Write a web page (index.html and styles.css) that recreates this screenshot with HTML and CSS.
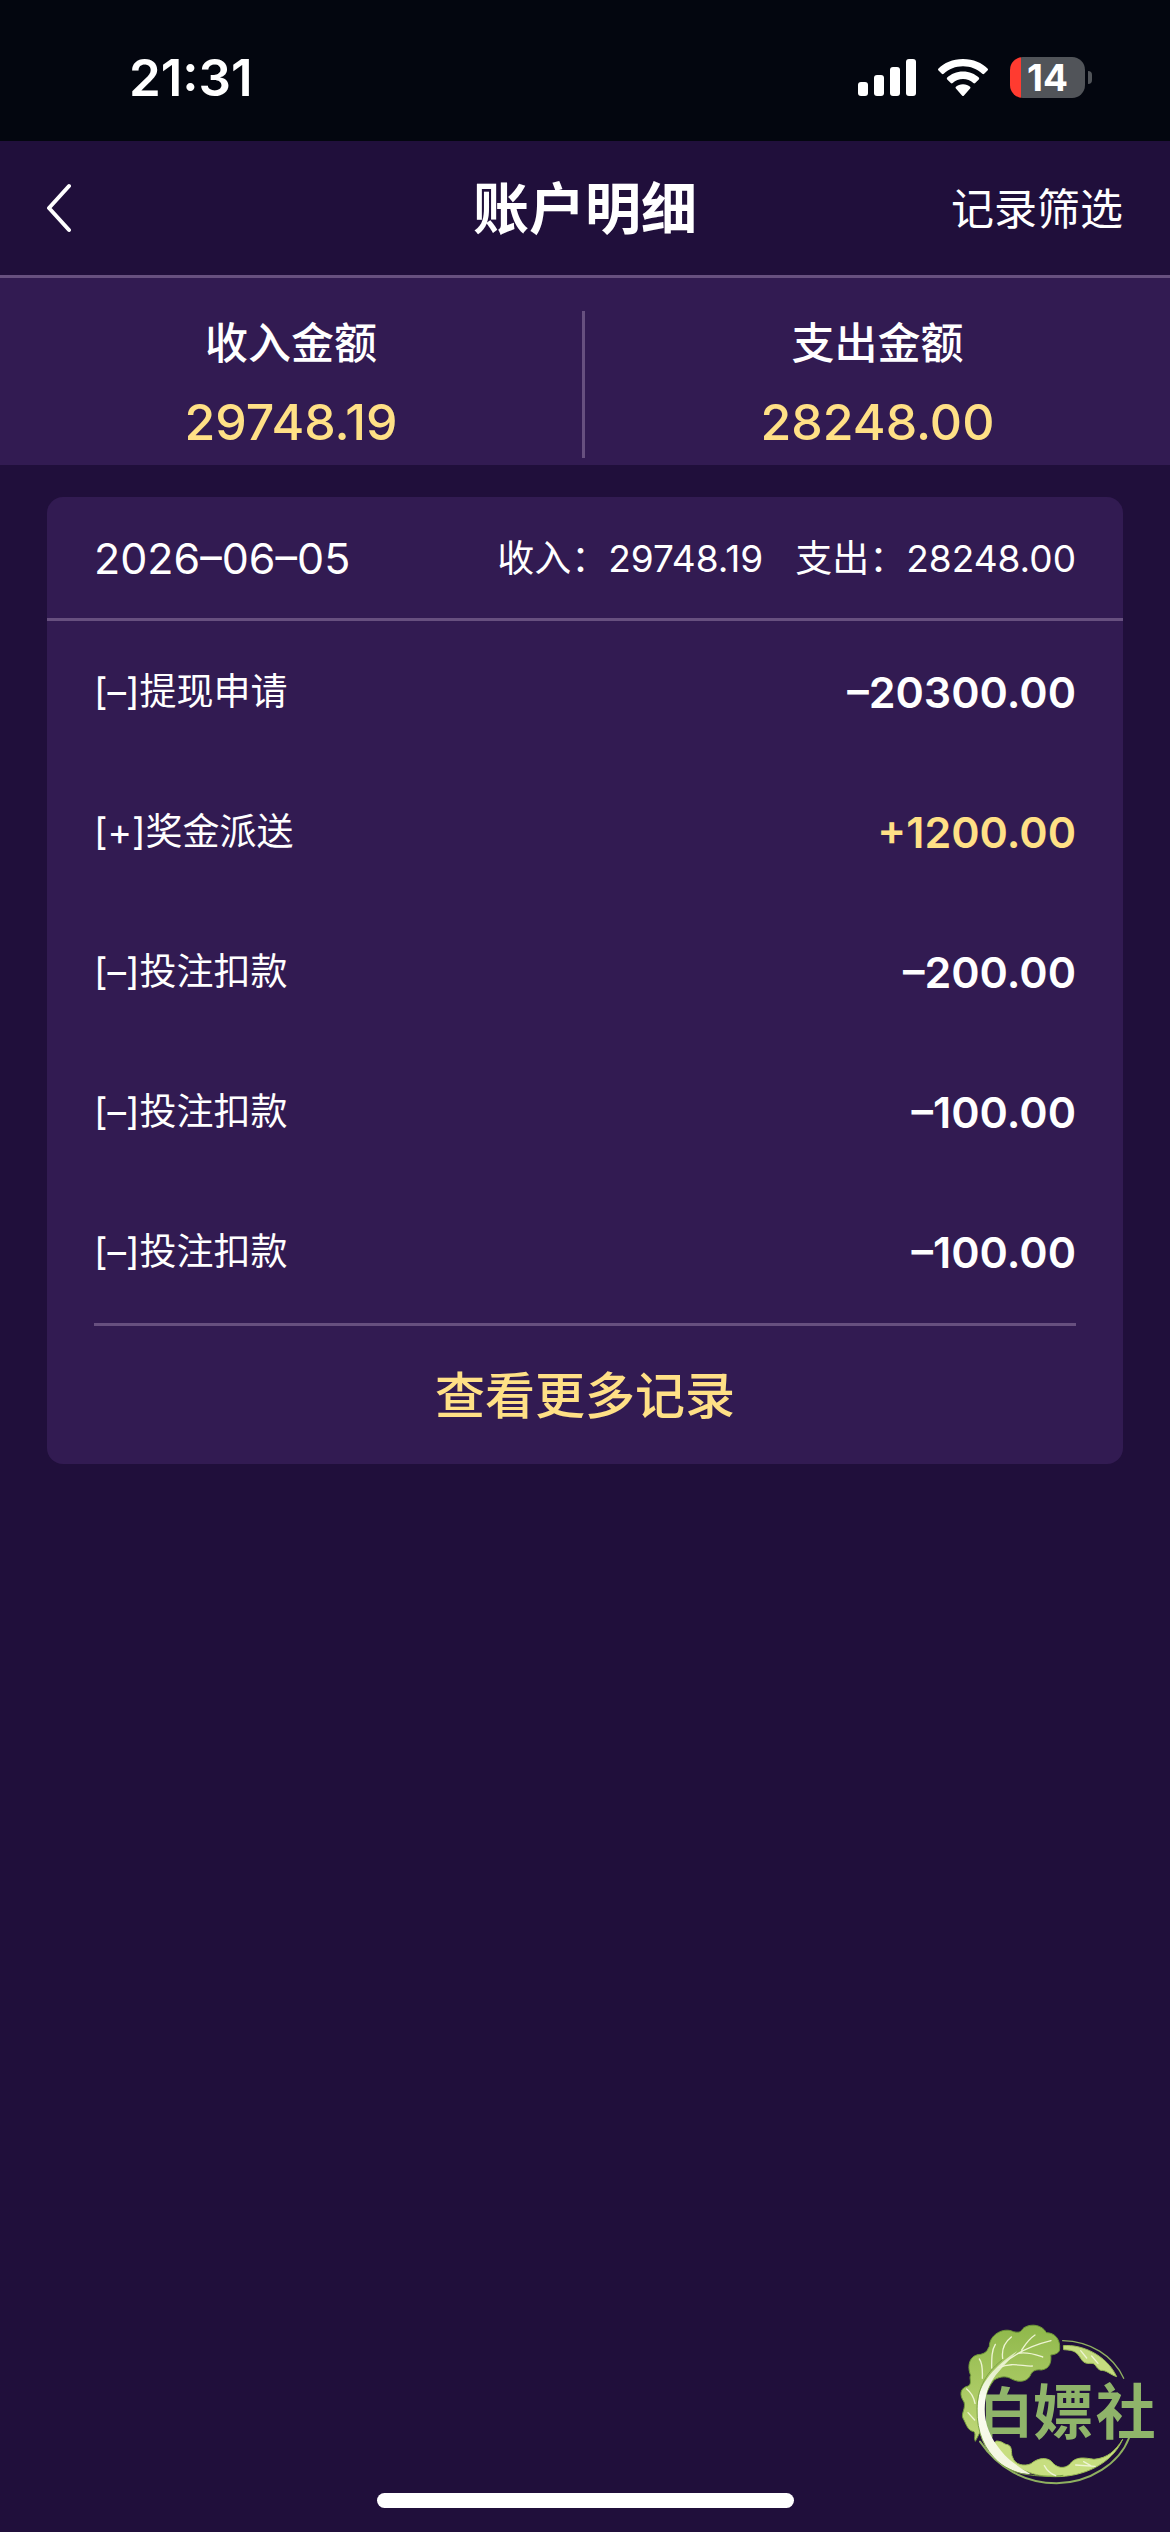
FILE: index.html
```html
<!DOCTYPE html>
<html lang="zh-CN">
<head>
<meta charset="utf-8">
<meta name="viewport" content="width=device-width, initial-scale=1">
<title>账户明细</title>
<link rel="stylesheet" href="styles.css">
</head>
<body>
<div class="screen">
  <div class="status">
    <time class="clock">21:31</time>
    <div class="indicators">
      <svg class="signal" width="58" height="38" viewBox="0 0 58 38" fill="#fff" aria-hidden="true">
        <rect x="0" y="23" width="10" height="14" rx="3"/>
        <rect x="16" y="16" width="10" height="21" rx="3"/>
        <rect x="32" y="8" width="10" height="29" rx="3"/>
        <rect x="48" y="0" width="10" height="37" rx="3"/>
      </svg>
      <svg class="wifi" width="50" height="38" viewBox="0 0 50 38" fill="#fff" aria-hidden="true">
        <path d="M25 0C35.500 0 44 4 49.500 9.500Q50.500 10.500 49.500 11.500L46.200 14.800Q45.300 15.600 44.300 14.800C39 10 32.500 7.300 25 7.300S11 10 5.700 14.800Q4.700 15.600 3.800 14.800L.5 11.500Q-.5 10.500 .5 9.500C6 4 14.500 0 25 0Z"/>
        <path d="M25 12.500C31.500 12.500 37 15 40.800 18.600Q41.700 19.500 40.800 20.400L37.200 24Q36.300 24.800 35.300 24C32.500 21.500 29 20 25 20S17.500 21.500 14.700 24Q13.700 24.800 12.800 24L9.200 20.400Q8.300 19.500 9.200 18.600C13 15 18.500 12.500 25 12.500Z"/>
        <path d="M25 25.200C28 25.200 30.300 26.300 32.100 27.800Q33 28.700 32.100 29.600L26 36.400Q25 37.400 24 36.400L17.900 29.600Q17 28.700 17.900 27.800C19.700 26.300 22 25.200 25 25.200Z"/>
      </svg>
      <div class="battery"><span class="battery-body">14</span><span class="battery-tip"></span></div>
    </div>
  </div>

  <header class="navbar">
    <button class="back" type="button" aria-label="返回">
      <svg width="24" height="50" viewBox="0 0 24 50" fill="none" stroke="#fff" stroke-width="4" stroke-linecap="round" stroke-linejoin="round" aria-hidden="true"><path d="M22 3L2 25L22 47"/></svg>
    </button>
    <h1 class="title">账户明细</h1>
    <button class="filter" type="button">记录筛选</button>
  </header>

  <section class="summary">
    <div class="total"><span class="total-label">收入金额</span><span class="total-value">29748.19</span></div>
    <div class="total"><span class="total-label">支出金额</span><span class="total-value">28248.00</span></div>
  </section>

  <main class="content">
    <section class="card">
      <div class="card-head">
        <time class="date" datetime="2026-06-05">2026–06–05</time>
        <div class="day-totals"><span>收入：29748.19</span><span>支出：28248.00</span></div>
      </div>
      <ul class="records">
        <li class="record"><span class="kind">[–]提现申请</span><b class="amount">–20300.00</b></li>
        <li class="record"><span class="kind">[+]奖金派送</span><b class="amount gain">+1200.00</b></li>
        <li class="record"><span class="kind">[–]投注扣款</span><b class="amount">–200.00</b></li>
        <li class="record"><span class="kind">[–]投注扣款</span><b class="amount">–100.00</b></li>
        <li class="record"><span class="kind">[–]投注扣款</span><b class="amount">–100.00</b></li>
      </ul>
      <button class="more" type="button">查看更多记录</button>
    </section>
  </main>

  <svg class="logo" width="230" height="200" viewBox="0 0 690 600" role="img" aria-label="白嫖社">
    <defs>
      <linearGradient id="leaf" x1="0" y1="0" x2="0" y2="1"><stop offset="0" stop-color="#8fb84b"/><stop offset="1" stop-color="#c0d878"/></linearGradient>
      <linearGradient id="stem" x1="0" y1="0" x2="0" y2="1"><stop offset="0" stop-color="#d5e6b0"/><stop offset=".4" stop-color="#fbfdf3"/><stop offset="1" stop-color="#f1f5dc"/></linearGradient>
    </defs>
    <g fill="none" stroke="#8fb060" stroke-linecap="round">
      <path stroke-width="4" d="M368 122C450 124 520 166 551 235"/>
      <path stroke-width="6" d="M120 425C175 505 255 549 350 550C450 548 538 490 567 414"/>
    </g>
    <path fill="#c5dc80" stroke="#9cbd55" stroke-width="3" d="M370 137C425 132 500 165 530 230C510 224 500 210 482 211C465 204 470 188 450 190C425 193 424 172 410 160C400 150 385 150 371 149Z"/>
    <path fill="#c7de80" stroke="#9cbd55" stroke-width="3" d="M170 423C192 425 190 433 203 434C220 440 211 462 218 472C224 495 254 500 273 491C296 472 320 472 334 484C350 506 374 507 389 493C407 467 436 474 462 478C503 474 526 453 548 418C516 492 430 531 345 530C250 530 190 480 160 430Z"/>
    <path fill="url(#leaf)" stroke="#6f9a38" stroke-width="3" d="M106 424C100 412 109 405 102 395C82 393 78 370 69 355C62 342 78 325 72 306C57 285 60 263 85 258C98 248 86 236 92 226C80 198 88 164 122 163C144 157 141 149 148 139C148 105 190 80 220 95C245 101 243 90 252 83C275 69 307 75 319 98C345 98 361 119 359 145C360 160 343 164 332 165C335 184 330 207 304 210C282 207 275 217 270 228C260 246 235 248 215 237C200 228 182 228 162 240C130 280 128 330 134 370Z"/>
    <g class="logo-text"><text class="logo-first" x="118" y="398">白</text><text x="280" y="402">嫖</text><text x="467" y="402">社</text></g>
    <path fill="url(#stem)" d="M232 153C178 187 126 240 116 290C103 370 121 440 172 484C205 509 238 524 272 522C246 507 208 484 183 452C145 405 128 358 136 300C141 260 160 232 185 205C200 187 220 168 232 153Z"/>
    <path fill="none" stroke="#7da345" stroke-width="3" d="M186 180C130 225 112 275 111 325C110 400 134 448 175 486C202 508 235 522 272 525C300 530 345 529 370 526"/>
    <g fill="none" stroke="#edf4d2" stroke-width="4" stroke-linecap="round">
      <path d="M185 195C225 160 280 135 333 122M188 175C184 145 196 125 214 111M245 150C255 135 265 118 285 105M235 160C265 155 290 165 308 171M177 203C215 185 250 200 277 198M155 204C155 175 155 150 166 133M127 235C128 210 128 190 118 177M105 310C101 290 93 277 80 267M104 360L84 338M313 497C322 514 332 522 347 527M407 495L465 499M431 485L452 497M422 152L440 174M455 168L474 190"/>
    </g>
  </svg>
  <div class="home-bar"></div>
</div>
</body>
</html>
```
FILE: styles.css
```css
* {
  box-sizing: border-box;
}

body {
  margin: 0;
  background: #200f3b;
  color: #fff;
  font-family: Inter, "Noto Sans CJK SC", sans-serif;
}

button {
  padding: 0;
  border: 0;
  background: none;
  color: inherit;
  font: inherit;
}

.screen {
  position: relative;
  display: flex;
  flex-direction: column;
  min-height: 100vh;
}

.status {
  display: flex;
  align-items: center;
  justify-content: space-between;
  height: 141px;
  padding: 14px 78px 0 129px;
  background: #03060f;
}

.clock {
  font-size: 51px;
  font-weight: 600;
}

.indicators {
  display: flex;
  align-items: center;
  gap: 22px;
}

.battery {
  display: flex;
  align-items: center;
  gap: 3px;
}

.battery-body {
  width: 75px;
  height: 41px;
  border-radius: 13px;
  background: linear-gradient(to right, #ff3b30 11px, #515459 11px);
  font-size: 37px;
  font-weight: 700;
  line-height: 41px;
  text-align: center;
}

.battery-tip {
  width: 4px;
  height: 13px;
  border-radius: 0 4px 4px 0;
  background: #515459;
}

.navbar {
  display: grid;
  grid-template-columns: 1fr auto 1fr;
  align-items: center;
  height: 137px;
  padding: 0 47px;
  border-bottom: 3px solid #67507f;
}

.back {
  display: flex;
  justify-self: start;
}

.title {
  margin: 0;
  padding-bottom: 8px;
  font-size: 56px;
  font-weight: 700;
}

.filter {
  justify-self: end;
  padding-bottom: 4px;
  font-size: 43px;
}

.summary {
  display: grid;
  grid-template-columns: 1fr 1fr;
  padding: 33px 0 7px;
  background: #321b52;
}

.total {
  display: flex;
  flex-direction: column;
  align-items: center;
  gap: 15px;
  padding-bottom: 3px;
}

.total:first-child {
  border-right: 3px solid #67507f;
}

.total-label {
  font-size: 43px;
  font-weight: 500;
  line-height: 64px;
}

.total-value {
  color: #ffe086;
  font-size: 50px;
  font-weight: 500;
  line-height: 65px;
}

.content {
  padding: 32px 47px;
}

.card {
  border-radius: 16px;
  background: #321b52;
}

.card-head {
  display: flex;
  align-items: center;
  justify-content: space-between;
  height: 124px;
  padding: 0 47px;
  border-bottom: 3px solid #67507f;
}

.date {
  font-size: 43px;
}

.day-totals {
  display: flex;
  gap: 32px;
  padding-bottom: 4px;
  font-size: 37px;
}

.records {
  margin: 0 47px;
  padding: 1px 0;
  border-bottom: 3px solid #67507f;
  list-style: none;
}

.record {
  display: flex;
  align-items: center;
  justify-content: space-between;
  height: 140px;
}

.kind {
  padding-bottom: 6px;
  font-size: 37px;
}

.amount {
  font-size: 43px;
  font-weight: 600;
}

.gain {
  color: #ffe086;
}

.more {
  display: block;
  width: 100%;
  height: 138px;
  padding-bottom: 6px;
  color: #ffe086;
  font-size: 50px;
  font-weight: 500;
}

.logo {
  position: absolute;
  right: 0;
  bottom: 32px;
}

.logo-text {
  fill: #8fb46a;
  font-family: "Noto Sans CJK SC", sans-serif;
  font-size: 180px;
  font-weight: 700;
}

.logo-first {
  font-size: 162px;
}

.home-bar {
  width: 417px;
  height: 15px;
  margin: auto auto 24px;
  border-radius: 8px;
  background: #fff;
}
```
